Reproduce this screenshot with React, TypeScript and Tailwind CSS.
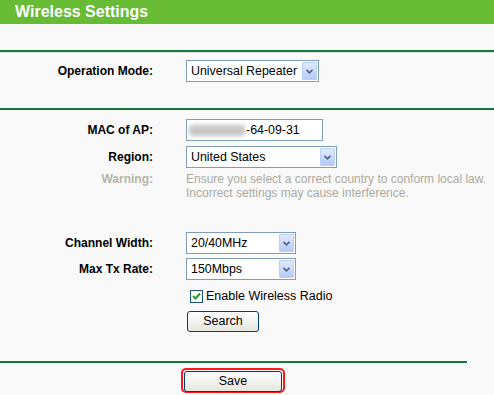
import React from "react";

const font = { fontFamily: '"Liberation Sans", Arial, sans-serif' };

function Arrow() {
  return (
    <div className="absolute right-[1px] top-[1px] bottom-[1px] w-[15px] flex items-center justify-center rounded-[1px] border border-[#bccff7] bg-gradient-to-b from-[#e1e9fd] to-[#b7cbf8]">
      <svg width="7" height="5" viewBox="0 0 7 5">
        <path d="M0.5 0.8 L3.5 3.8 L6.5 0.8" fill="none" stroke="#4d6185" strokeWidth="1.6" />
      </svg>
    </div>
  );
}

function Select({ value, w }: { value: string; w: string }) {
  return (
    <div className={`relative h-[22px] ${w} border border-[#7f9db9] bg-white flex items-center pl-[4px] text-[12.4px] text-black`}>
      {value}
      <Arrow />
    </div>
  );
}

function Row({ label, children, gray, h = "h-[22px]" }: { label: string; children: React.ReactNode; gray?: boolean; h?: string }) {
  return (
    <div className={`flex items-center ${h}`}>
      <div className={`w-[153px] text-right text-[12px] font-bold ${gray ? "text-[#b0b0a4]" : "text-black"}`}>{label}</div>
      <div className="ml-[33px] flex items-center">{children}</div>
    </div>
  );
}

function Btn({ label, w }: { label: string; w: string }) {
  return (
    <div className={`h-[21px] ${w} rounded-[3px] border border-[#003c74] bg-gradient-to-b from-white to-[#e6e6df] flex items-center justify-center text-[12.5px] text-black`}>
      {label}
    </div>
  );
}

export default function App() {
  return (
    <div className="w-[494px] h-[395px] bg-[#f9f9f9] overflow-hidden" style={font}>
      <div className="h-[24px] bg-[#67bb35] flex items-center pl-[15px] text-white font-bold text-[16px]">Wireless Settings</div>
      <div className="h-[26px]" />
      <div className="h-[2px] bg-[#0f7a3c]" />
      <div className="h-[1px] bg-[#e2e2e2]" />
      <div className="pt-[7px] h-[55px]">
        <Row label="Operation Mode:">
          <Select value="Universal Repeater" w="w-[133px]" />
        </Row>
      </div>
      <div className="h-[2px] bg-[#0f7a3c]" />
      <div className="pt-[9px]">
        <Row label="MAC of AP:">
          <div className="h-[22px] w-[137px] border border-[#7f9db9] bg-white flex items-center pl-[2px] text-[12.4px] text-black">
            <span className="inline-block h-[11px] w-[56px] rounded-[3px] bg-[#c6c6c6] blur-[2px]" />
            <span className="ml-[1px]">-64-09-31</span>
          </div>
        </Row>
        <div className="h-[5px]" />
        <Row label="Region:">
          <Select value="United States" w="w-[151px]" />
        </Row>
        <div className="flex mt-[4px]">
          <div className="w-[153px] text-right text-[12px] font-bold text-[#b5b5a8] leading-[14px]">Warning:</div>
          <div className="ml-[33px] text-[12px] leading-[14px] text-[#aaa99f]">
            Ensure you select a correct country to conform local law.
            <br />
            Incorrect settings may cause interference.
          </div>
        </div>
        <div className="h-[32px]" />
        <Row label="Channel Width:">
          <Select value="20/40MHz" w="w-[110px]" />
        </Row>
        <div className="h-[4px]" />
        <Row label="Max Tx Rate:">
          <Select value="150Mbps" w="w-[110px]" />
        </Row>
        <div className="flex items-center h-[24px] mt-[4px]">
          <div className="ml-[190px] w-[13px] h-[13px] border border-[#1c5180] bg-white flex items-center justify-center">
            <svg width="9" height="8" viewBox="0 0 9 8">
              <path d="M1 4 L3.5 6.5 L8 1.5" fill="none" stroke="#21a121" strokeWidth="2" />
            </svg>
          </div>
          <span className="ml-[3px] text-[12.5px] text-black">Enable Wireless Radio</span>
        </div>
        <div className="mt-[3px] ml-[187px]">
          <Btn label="Search" w="w-[72px]" />
        </div>
      </div>
      <div className="h-[29px]" />
      <div className="h-[2px] w-[467px] bg-[#0f7a3c]" />
      <div className="mt-[5px] ml-[181px] w-[104px] h-[25px] rounded-[5px] border-2 border-[#ff1a1a] p-[1px] flex">
        <Btn label="Save" w="w-[98px]" />
      </div>
    </div>
  );
}
